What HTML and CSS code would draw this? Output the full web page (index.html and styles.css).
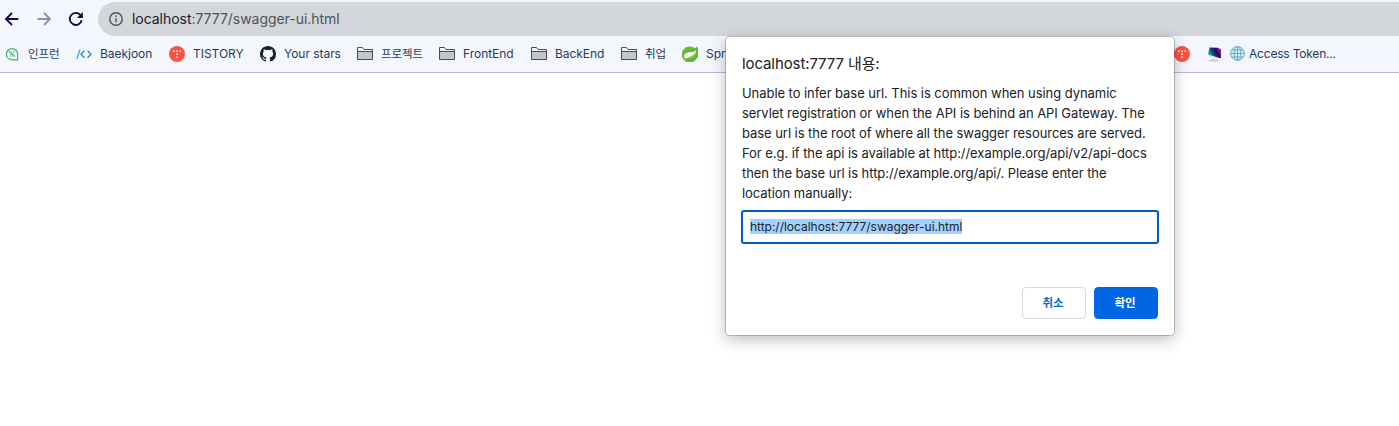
FILE: index.html
```html
<!DOCTYPE html>
<html lang="ko">
<head>
<meta charset="utf-8">
<title>swagger-ui</title>
<link rel="stylesheet" href="styles.css">
</head>
<body>
<svg class="defs" width="0" height="0">
  <symbol id="folder" viewBox="0 0 16 16"><path d="M.5 13.500v-12h5l1.500 2h8.500v10z" fill="#f3f5fa" stroke="#4b4b50"/><path d="M1 6h14v7H1z" fill="#c5c6ca"/><path d="M1 5.500h14" stroke="#4b4b50"/></symbol>
  <symbol id="tistory" viewBox="0 0 16 16"><circle cx="8" cy="8" r="8" fill="#ff5144"/><g fill="#fff"><circle cx="4.900" cy="5.100" r=".9"/><circle cx="8" cy="5.100" r=".9"/><circle cx="11.100" cy="5.100" r=".9"/><circle cx="8" cy="8.100" r=".9"/><circle cx="8" cy="11.100" r=".9"/></g></symbol>
</svg>
<header class="browser">
  <div class="toolbar">
    <svg class="nav back" viewBox="0 0 16 16"><path d="M14.400 8H2.200M8 2 2 8l6 6"/></svg>
    <svg class="nav forward" viewBox="0 0 16 16"><path d="M1.600 8h12.200M8 2l6 6-6 6"/></svg>
    <svg class="nav reload" viewBox="0 0 16 16"><path d="M13.700 9.200A6 6 0 1 1 12.400 4l1.400 1.400"/><path class="tip" d="M14.800 1v6H8.900z"/></svg>
    <div class="address">
      <svg class="info" viewBox="0 0 14 14"><circle cx="7" cy="7" r="6.200"/><path d="M7 6.200v4M7 3.600v1.400"/></svg>
      <span class="url"><b>localhost</b>:7777/swagger-ui.html</span>
    </div>
  </div>
  <nav class="bookmarks">
    <a class="mark ko"><svg viewBox="0 0 16 16"><path d="M13.600 13.800H8A5.600 5.600 0 1 1 13.600 8.200z" fill="none" stroke="#3db765" stroke-width="1.200"/><path d="M5.200 5.200c2 .1 2.700.9 3 2.700 1.200.1 2.100.8 2.500 2.500-2-.1-2.700-1-2.800-2.200C6.200 8 5.400 7 5.200 5.200zM10 4.600v2M5.500 10h2" fill="none" stroke="#3db765"/></svg><span>인프런</span></a>
    <a class="mark"><svg viewBox="0 0 16 16"><path d="M4 3.500.8 13" stroke="#3b9ddb" stroke-width="1.200"/><path d="M8.400 4.700 5 8.200l3.400 3.500M11.600 4.700 15 8.200l-3.400 3.500" fill="none" stroke="#3187cf" stroke-width="1.300"/></svg><span>Baekjoon</span></a>
    <a class="mark"><svg><use href="#tistory"/></svg><span>TISTORY</span></a>
    <a class="mark"><svg viewBox="0 0 16 16"><path fill="#1d2026" d="M8 0C3.580 0 0 3.580 0 8c0 3.540 2.290 6.530 5.470 7.590.4.070.55-.17.55-.38 0-.19-.010-.82-.010-1.490-2.010.37-2.530-.49-2.690-.94-.09-.23-.48-.94-.82-1.130-.28-.15-.68-.52-.010-.53.63-.010 1.080.58 1.230.82.72 1.210 1.870.87 2.330.66.070-.52.28-.87.510-1.070-1.780-.2-3.640-.89-3.640-3.950 0-.87.310-1.590.82-2.150-.08-.2-.36-1.020.08-2.120 0 0 .67-.210 2.200.82a7.400 7.400 0 0 1 4 0c1.530-1.040 2.200-.82 2.200-.82.44 1.100.16 1.920.08 2.120.51.56.82 1.270.82 2.150 0 3.070-1.870 3.750-3.650 3.950.29.25.54.73.54 1.480 0 1.070-.010 1.930-.010 2.200 0 .21.150.46.550.38A8 8 0 0 0 16 8c0-4.420-3.580-8-8-8z"/></svg><span>Your stars</span></a>
    <a class="mark ko"><svg><use href="#folder"/></svg><span>프로젝트</span></a>
    <a class="mark"><svg><use href="#folder"/></svg><span>FrontEnd</span></a>
    <a class="mark"><svg><use href="#folder"/></svg><span>BackEnd</span></a>
    <a class="mark ko"><svg><use href="#folder"/></svg><span>취업</span></a>
    <a class="mark"><svg viewBox="0 0 16 16"><path d="M14.500.5A8 8 0 0 1 14.700 12.500 8 8 0 1 1 12.800 2.300 7 7 0 0 0 14.500.5z" fill="#68b92e"/><path d="M13.900 3.800C12.600 6.600 9 6 6 6.500c-4 .8-4.600 4.200-2.700 6.300 3-.2 5.200-.8 7.200-2.300 2.400-1.800 3.600-4.100 3.400-6.700z" fill="#f3f6fc"/><path d="M3.300 12.800c3.500-.7 7-2.500 9.500-6.600-1.500 4-4.600 6.700-9 7.300z" fill="#68b92e"/></svg><span>Spring</span></a>
    <a class="mark"><svg><use href="#tistory"/></svg></a>
    <a class="mark"><svg viewBox="0 0 16 16"><defs><linearGradient id="screen" x1="0" y1=".7" x2="1" y2=".3"><stop offset="0" stop-color="#19c5bd"/><stop offset=".45" stop-color="#143675"/><stop offset=".7" stop-color="#260756"/><stop offset="1" stop-color="#b324bd"/></linearGradient></defs><path d="M3.500 1.500 12 1.800l3 1.500V12l-3-.3L2 8.500z" fill="url(#screen)"/><path d="m1.500 8.500 11 3.600-1 1.200L1.500 10zM6 12l3 .5v1.500H6z" fill="#e3e5e7"/><ellipse cx="7.500" cy="14.500" rx="4.500" ry="1" fill="#c3c5c8"/></svg></a>
    <a class="mark access"><svg viewBox="0 0 16 16"><g fill="#dcf1f8" stroke="#50a9c8" stroke-width=".9"><circle cx="7.500" cy="7.500" r="6.900"/><ellipse cx="7.500" cy="7.500" rx="3.400" ry="6.900"/><path d="M7.500.6v13.800M.6 7.500h13.800M1.800 4h11.400M1.800 11h11.400"/></g></svg><span>Access Token...</span></a>
  </nav>
</header>
<section class="dialog" role="dialog">
  <h1 class="title">localhost:7777 <span>내용:</span></h1>
  <p class="message">Unable to infer base url. This is common when using dynamic<br>servlet registration or when the API is behind an API Gateway. The<br>base url is the root of where all the swagger resources are served.<br>For e.g. if the api is available at http://example.org/api/v2/api-docs<br>then the base url is http://example.org/api/. Please enter the<br>location manually:</p>
  <div class="field"><span class="selected">http://localhost:7777/swagger-ui.html</span></div>
  <div class="actions"><button class="button">취소</button><button class="button primary">확인</button></div>
</section>
</body>
</html>
```
FILE: styles.css
```css
* { box-sizing: border-box; }
body { margin: 0; height: 426px; overflow: hidden; background: #fff; font-family: Inter, "Noto Sans CJK KR", sans-serif; }
.defs { position: absolute; }
.browser { height: 73px; background: #f3f6fc; border-bottom: 1px solid #bab8d8; }
.toolbar { display: flex; align-items: center; height: 36px; padding: 2px 0 0 4px; }
.nav { flex: none; width: 16px; height: 16px; margin-right: 16px; fill: none; stroke: #16083c; stroke-width: 1.9; }
.forward { stroke: #928bad; }
.reload { margin-right: 14px; }
.nav .tip { fill: #16083c; stroke: none; }
.address { flex: 1; display: flex; align-items: center; height: 34px; padding-left: 11px; border-radius: 17px 0 0 17px; background: #d3d6db; gap: 9px; }
.info { width: 14px; height: 14px; fill: none; stroke: #505257; stroke-width: 1.4; }
.url { padding-bottom: 1px; font-size: 14px; letter-spacing: -.04px; color: #505256; white-space: nowrap; }
.url b { font-weight: 400; color: #202124; }
.bookmarks { display: grid; grid-template-columns: 72px 93px 91px 97px 82px 92px 90px 61px 492px 32px 24px auto; align-items: center; height: 36px; padding-left: 4px; }
.mark { display: flex; align-items: center; gap: 8px; white-space: nowrap; font-size: 12px; letter-spacing: -.04px; color: #1d3c60; }
.mark span { padding-bottom: 2px; }
.ko { font-size: 11.5px; }
.mark svg { width: 16px; height: 16px; flex: none; }
.access { gap: 3px; letter-spacing: -.2px; }
.dialog { position: absolute; left: 726px; top: 37px; width: 448px; height: 298px; padding: 16px; border-radius: 4px; background: #fff; box-shadow: 0 0 0 1px rgba(0,0,0,.2), 0 4px 16px rgba(0,0,0,.28); color: #202124; }
.title { margin: 0; font-size: 15px; font-weight: 400; line-height: 22px; letter-spacing: -.1px; }
.message { margin: 8px 0 0; font-size: 13px; line-height: 20px; letter-spacing: -.055px; white-space: nowrap; }
.field { display: flex; align-items: center; height: 34px; margin: 7px -1px 0; padding: 0 7px 2px; border: 2px solid #0059c8; border-radius: 3px; font-size: 12px; letter-spacing: -.02px; }
.selected { background: #a5d1ff; line-height: 15px; }
.actions { display: flex; justify-content: flex-end; gap: 8px; margin-top: 43px; }
.button { width: 64px; height: 32px; padding: 0 2px 2px 0; border: 1px solid #d7d9df; border-radius: 4px; background: #fff; color: #0b67dc; font: 600 11.500px Inter, "Noto Sans CJK KR", sans-serif; }
.primary { border-color: #0066e3; background: #0066e3; color: #fff; }
```
